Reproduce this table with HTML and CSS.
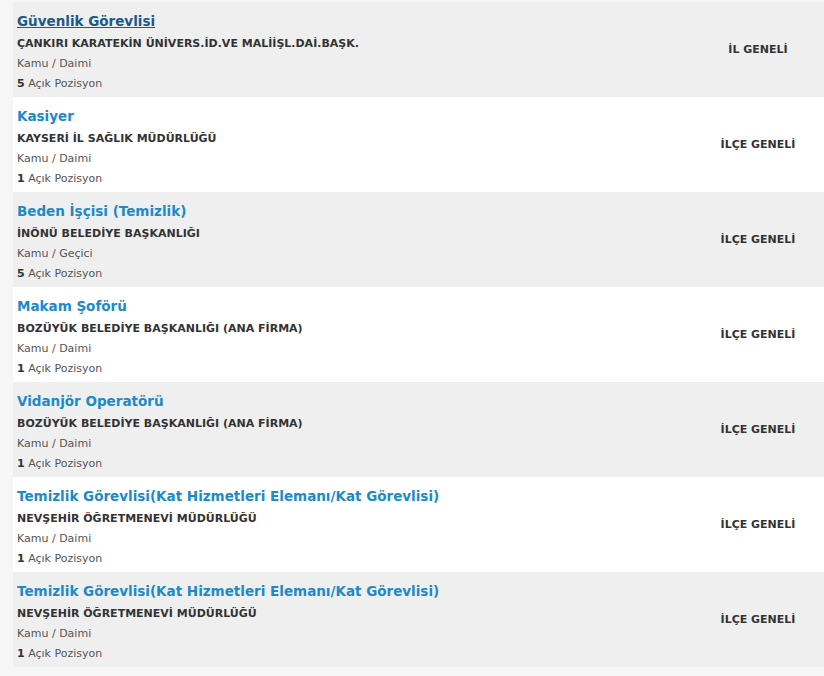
FILE: index.html
```
<!DOCTYPE html>
<html lang="tr">
	<head>
		<meta charset="utf-8" />
		<meta name="viewport" content="width=device-width, initial-scale=1.0" />
		<title>İş İlanları</title>
		<link rel="stylesheet" href="styles.css">
	</head>
	<body>
		<ul class="jobs">
			<li class="job">
				<div class="job-info">
					<a href="#" class="job-title is-hover">Güvenlik Görevlisi</a>
					<div class="job-company">ÇANKIRI KARATEKİN ÜNİVERS.İD.VE MALİİŞL.DAİ.BAŞK.</div>
					<div class="job-type">Kamu / Daimi</div>
					<div class="job-count"><strong>5</strong> Açık Pozisyon</div>
				</div>
				<div class="job-area">İL GENELİ</div>
			</li>
			<li class="job">
				<div class="job-info">
					<a href="#" class="job-title">Kasiyer</a>
					<div class="job-company">KAYSERİ İL SAĞLIK MÜDÜRLÜĞÜ</div>
					<div class="job-type">Kamu / Daimi</div>
					<div class="job-count"><strong>1</strong> Açık Pozisyon</div>
				</div>
				<div class="job-area">İLÇE GENELİ</div>
			</li>
			<li class="job">
				<div class="job-info">
					<a href="#" class="job-title">Beden İşçisi (Temizlik)</a>
					<div class="job-company">İNÖNÜ BELEDİYE BAŞKANLIĞI</div>
					<div class="job-type">Kamu / Geçici</div>
					<div class="job-count"><strong>5</strong> Açık Pozisyon</div>
				</div>
				<div class="job-area">İLÇE GENELİ</div>
			</li>
			<li class="job">
				<div class="job-info">
					<a href="#" class="job-title">Makam Şoförü</a>
					<div class="job-company">BOZÜYÜK BELEDİYE BAŞKANLIĞI (ANA FİRMA)</div>
					<div class="job-type">Kamu / Daimi</div>
					<div class="job-count"><strong>1</strong> Açık Pozisyon</div>
				</div>
				<div class="job-area">İLÇE GENELİ</div>
			</li>
			<li class="job">
				<div class="job-info">
					<a href="#" class="job-title">Vidanjör Operatörü</a>
					<div class="job-company">BOZÜYÜK BELEDİYE BAŞKANLIĞI (ANA FİRMA)</div>
					<div class="job-type">Kamu / Daimi</div>
					<div class="job-count"><strong>1</strong> Açık Pozisyon</div>
				</div>
				<div class="job-area">İLÇE GENELİ</div>
			</li>
			<li class="job">
				<div class="job-info">
					<a href="#" class="job-title">Temizlik Görevlisi(Kat Hizmetleri Elemanı/Kat Görevlisi)</a>
					<div class="job-company">NEVŞEHİR ÖĞRETMENEVİ MÜDÜRLÜĞÜ</div>
					<div class="job-type">Kamu / Daimi</div>
					<div class="job-count"><strong>1</strong> Açık Pozisyon</div>
				</div>
				<div class="job-area">İLÇE GENELİ</div>
			</li>
			<li class="job">
				<div class="job-info">
					<a href="#" class="job-title">Temizlik Görevlisi(Kat Hizmetleri Elemanı/Kat Görevlisi)</a>
					<div class="job-company">NEVŞEHİR ÖĞRETMENEVİ MÜDÜRLÜĞÜ</div>
					<div class="job-type">Kamu / Daimi</div>
					<div class="job-count"><strong>1</strong> Açık Pozisyon</div>
				</div>
				<div class="job-area">İLÇE GENELİ</div>
			</li>
		</ul>
	</body>
</html>
```

FILE: styles.css
```
body {
	margin: 0;
	padding: 2px 0 0 13px;
	background: #f6f6f6;
	color: #444;
	font-family: 'DejaVu Sans', Verdana, sans-serif;
	font-size: 11px;
}

.jobs {
	list-style: none;
	margin: 0;
	padding: 0;
}

.job {
	display: grid;
	grid-template-columns: 1fr 132px;
	align-items: center;
	height: 95px;
	box-sizing: border-box;
	padding: 7px 0 0 4px;
	background: #efefef;
}

.job:nth-child(even) {
	background: #ffffff;
}

.job-info {
	align-self: start;
	display: flex;
	flex-direction: column;
	align-items: flex-start;
}

.job-title {
	color: #1b8ac9;
	font-size: 13.5px;
	font-weight: bold;
	line-height: 24px;
	text-decoration: none;
}

.job-title.is-hover {
	color: #1a5a87;
	text-decoration: underline;
}

.job-company {
	color: #333;
	font-weight: bold;
	line-height: 21px;
}

.job-type {
	color: #555;
	line-height: 19px;
}

.job-count {
	color: #555;
	line-height: 21px;
}

.job-count strong {
	color: #333;
}

.job-area {
	color: #333;
	font-weight: bold;
	text-align: center;
	margin-top: -7px;
}
```
